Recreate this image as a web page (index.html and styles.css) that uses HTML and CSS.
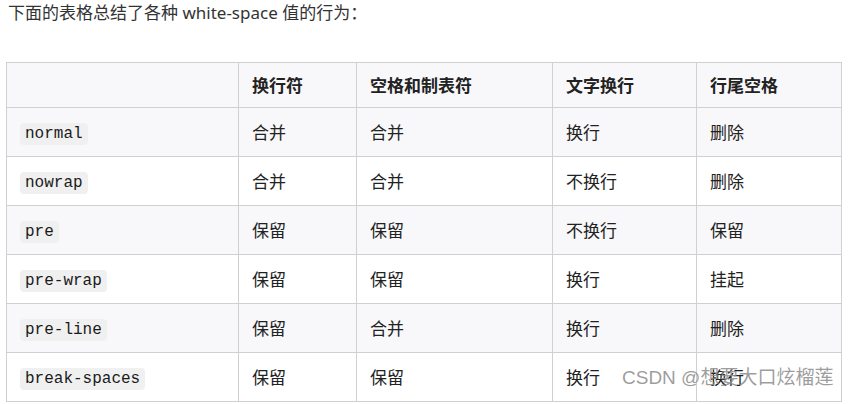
FILE: index.html
```html
<!DOCTYPE html>
<html lang="zh">
<head>
<meta charset="utf-8">
<link rel="stylesheet" href="styles.css">
</head>
<body>
<div class="page">
  <p class="intro">下面的表格总结了各种 white-space 值的行为：</p>
  <table class="ws-table">
    <colgroup>
      <col class="c1"><col class="c2"><col class="c3"><col class="c4"><col class="c5">
    </colgroup>
    <thead>
      <tr><th></th><th>换行符</th><th>空格和制表符</th><th>文字换行</th><th>行尾空格</th></tr>
    </thead>
    <tbody>
      <tr><td><code>normal</code></td><td>合并</td><td>合并</td><td>换行</td><td>删除</td></tr>
      <tr><td><code>nowrap</code></td><td>合并</td><td>合并</td><td>不换行</td><td>删除</td></tr>
      <tr><td><code>pre</code></td><td>保留</td><td>保留</td><td>不换行</td><td>保留</td></tr>
      <tr><td><code>pre-wrap</code></td><td>保留</td><td>保留</td><td>换行</td><td>挂起</td></tr>
      <tr><td><code>pre-line</code></td><td>保留</td><td>合并</td><td>换行</td><td>删除</td></tr>
      <tr><td><code>break-spaces</code></td><td>保留</td><td>保留</td><td>换行</td><td>换行</td></tr>
    </tbody>
  </table>
  <div class="watermark">CSDN @想要大口炫榴莲</div>
</div>
</body>
</html>
```
FILE: styles.css
```css
html, body {
  margin: 0;
  padding: 0;
  background: #fff;
}
body {
  font-family: "Liberation Sans", "Noto Sans CJK SC", sans-serif;
  color: #333;
  font-size: 16px;
}
.page {
  position: relative;
  width: 849px;
  height: 404px;
  overflow: hidden;
}
.intro {
  margin: 0;
  padding: 1px 0 0 8px;
  line-height: 24px;
  font-family: "Noto Sans", "Noto Sans CJK SC", sans-serif;
  font-size: 17px;
  color: #333;
}
.ws-table {
  margin: 37px 0 0 6px;
  border-collapse: collapse;
  table-layout: fixed;
  width: 835px;
  font-family: "Noto Sans CJK SC", sans-serif;
  font-size: 17px;
}
.c1 { width: 232px; }
.c2 { width: 118px; }
.c3 { width: 196px; }
.c4 { width: 144px; }
.c5 { width: 145px; }
.ws-table th,
.ws-table td {
  border: 1px solid #d0d0d0;
  padding: 0 13px;
  text-align: left;
  vertical-align: middle;
  color: #222;
  line-height: 24px;
}
.ws-table th {
  height: 44px;
  font-weight: 700;
  background: #f8f8fa;
}
.ws-table td {
  height: 48px;
}
.ws-table tbody tr:nth-child(odd) td {
  background: #f8f8fa;
}
.ws-table code {
  display: inline-block;
  vertical-align: middle;
  font-family: "Liberation Mono", monospace;
  font-size: 16px;
  line-height: 22px;
  padding: 0 5px;
  background: #f0f0f0;
  border-radius: 4px;
  color: #1a1a1a;
}
.watermark {
  position: absolute;
  left: 622px;
  top: 364px;
  font-family: "Liberation Sans", "Noto Sans CJK SC", sans-serif;
  font-size: 19px;
  line-height: 28px;
  color: rgba(140, 140, 140, 0.85);
  white-space: nowrap;
}
```
